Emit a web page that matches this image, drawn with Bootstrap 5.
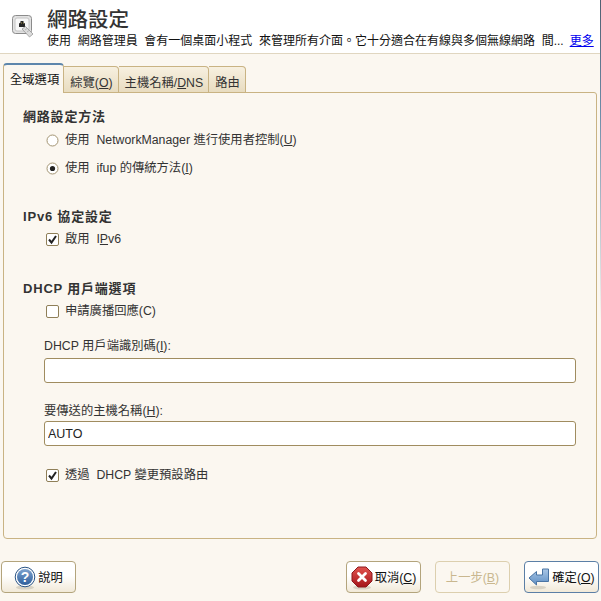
<!DOCTYPE html>
<html lang="zh-Hant">
<head>
  <meta charset="UTF-8" />
  <meta name="viewport" content="width=device-width, initial-scale=1" />
  <title>網路設定</title>
  <link href="https://cdn.jsdelivr.net/npm/bootstrap@5.3.0/dist/css/bootstrap.min.css" rel="stylesheet" />
  <style>
    html, body { height: 100%; }
    body {
      position: relative;
      width: 601px;
      height: 601px;
      overflow: hidden;
      background: #fbf7f0;
      color: #333;
      font-family: "Liberation Sans", "Noto Sans CJK TC", sans-serif;
      font-size: 12.3px;
      line-height: 16px;
    }
    /* window edge that fades out going down */
    body::after {
      content: "";
      position: absolute;
      top: 0;
      right: 0;
      width: 1px;
      height: 320px;
      background: linear-gradient(#4f5f70, #6d8ca8 35%, rgba(109, 140, 168, 0));
    }
    .head-bar { height: 54px; background: #fff; border-bottom: 1px solid #e0d6c0; padding: 8px 0 0 12px; gap: 13px; }
    .head-icon { width: 22px; height: 23px; margin-top: 7px; flex: none; }
    .head-title { font-size: 20.5px; line-height: 24px; font-weight: 500; color: #333; margin-bottom: 1px; }
    .head-text { color: #111; white-space: nowrap; font-size: 12px; }
    .head-more { color: #0000ee; margin-left: 6px; }
    .tab-strip { padding: 9px 0 0 3px; margin-bottom: -1px; position: relative; z-index: 1; }
    .tab-item {
      height: 27px;
      margin-top: 3px;
      padding: 8px 5px 0 6px;
      background: linear-gradient(#f7f0e0, #e8dcc0);
      border: 1px solid #c9b383;
      border-left-width: 0;
      border-radius: 0 4px 0 0;
    }
    .tab-on {
      height: 30px;
      margin-top: 0;
      padding: 7px 4px 0 6px;
      background: #fbf7f0;
      border-left-width: 1px;
      border-bottom: 0;
      border-top: 2px solid #5d86ac;
      border-radius: 4px 4px 0 0;
      color: #111;
    }
    .tab-panel {
      height: 447px;
      width: 594px;
      margin-left: 3px;
      border: 1px solid #c9b383;
      border-radius: 0 3px 4px 4px;
      padding: 16px 20px 0 19px;
    }
    .group-title { font-weight: 700; font-size: 13px; letter-spacing: 0.8px; height: 16px; }
    .option-row { height: 16px; padding-left: 23px; gap: 6px; }
    .radio-mark, .check-mark { width: 13px; height: 13px; flex: none; }
    .field-label { padding-left: 21px; height: 16px; }
    .field-input {
      display: block;
      width: 532px;
      margin-left: 21px;
      height: 25px;
      border: 1px solid #a08c5f;
      border-radius: 3px;
      background: #fff;
      padding: 1px 3px 0;
      color: #222;
      font-size: 12.5px;
    }
    .gap-method-a { margin-top: 7px; }
    .gap-method-b { margin-top: 12px; }
    .gap-ipv6 { margin-top: 33px; }
    .gap-ipv6-opt { margin-top: 6px; }
    .gap-dhcp { margin-top: 34px; }
    .gap-dhcp-opt { margin-top: 6px; }
    .gap-label-a { margin-top: 19px; }
    .gap-input-a { margin-top: 4px; }
    .gap-label-b { margin-top: 20px; }
    .gap-input-b { margin-top: 2px; }
    .gap-route { margin-top: 21px; }
    .foot-bar { padding: 22px 2px 0 1px; gap: 14px; }
    .win-btn {
      height: 32px;
      width: 75px;
      gap: 2px;
      border: 1px solid #b3a47c;
      border-radius: 4px;
      background: linear-gradient(#fff 45%, #f1e9d8);
      color: #111;
      padding: 2px 0 0;
    }
    .win-btn svg { width: 22px; height: 24px; flex: none; }
    .win-off { border-color: #dccfae; background: none; color: #c9b78f; }
    .win-main { border-color: #5b7fa6; }
  </style>
</head>
<body>

  <!-- Header -->
  <div class="head-bar d-flex">
    <svg class="head-icon" viewBox="0 0 22 23">
      <rect x="0.5" y="0.5" width="19" height="18" rx="3" fill="#e2e2e2" stroke="#8b8b8b" />
      <rect x="3" y="3" width="14" height="13" rx="2" fill="#f7f7f7" stroke="#c4c4c4" />
      <path d="M7 12V8.5l1.5-1V6h3v1.500l1.500 1V12z" fill="#262626" />
      <path d="M9 7.500h.8v1H9zM11 7.500h.8v1H11z" fill="#c9b25a" />
      <path d="M10 14l3.500-2.500 7.500 7.500-3.500 3z" fill="#dcdcdc" stroke="#8e8e8e" stroke-width="0.7" />
      <path d="M13 15l2-1.500M15 17l2-1.500" stroke="#a8a8a8" stroke-width="0.7" />
    </svg>
    <div class="min-w-0">
      <div class="head-title">網路設定</div>
      <div class="head-text">使用&nbsp; 網路管理員&nbsp; 會有一個桌面小程式&nbsp; 來管理所有介面。它十分適合在有線與多個無線網路&nbsp; 間...<a class="head-more" href="#">更多</a></div>
    </div>
  </div>

  <!-- Tabs -->
  <div class="tab-strip d-flex align-items-start">
    <div class="tab-item tab-on">全域選項</div>
    <div class="tab-item">綜覽(<u>O</u>)</div>
    <div class="tab-item">主機名稱/<u>D</u>NS</div>
    <div class="tab-item">路由</div>
  </div>

  <div class="tab-panel">
    <div class="group-title">網路設定方法</div>
    <div class="option-row d-flex align-items-center gap-method-a">
      <svg class="radio-mark" viewBox="0 0 13 13"><circle cx="6.500" cy="6.500" r="5.500" fill="#fff" stroke="#a39472" /></svg>
      <span>使用&nbsp; NetworkManager 進行使用者控制(<u>U</u>)</span>
    </div>
    <div class="option-row d-flex align-items-center gap-method-b">
      <svg class="radio-mark" viewBox="0 0 13 13"><circle cx="6.500" cy="6.500" r="5.500" fill="#fff" stroke="#a39472" /><circle cx="6.500" cy="6.500" r="2.600" fill="#222" /></svg>
      <span>使用&nbsp; ifup 的傳統方法(<u>I</u>)</span>
    </div>

    <div class="group-title gap-ipv6">IPv6 協定設定</div>
    <div class="option-row d-flex align-items-center gap-ipv6-opt">
      <svg class="check-mark" viewBox="0 0 13 13"><rect x="0.500" y="0.500" width="12" height="12" rx="1.500" fill="#fff" stroke="#8f7f58" /><path d="M3 6.500l2.500 3L10 3" fill="none" stroke="#222" stroke-width="2" /></svg>
      <span>啟用&nbsp; I<u>P</u>v6</span>
    </div>

    <div class="group-title gap-dhcp">DHCP 用戶端選項</div>
    <div class="option-row d-flex align-items-center gap-dhcp-opt">
      <svg class="check-mark" viewBox="0 0 13 13"><rect x="0.500" y="0.500" width="12" height="12" rx="1.500" fill="#fff" stroke="#8f7f58" /></svg>
      <span>申請廣播回應(C)</span>
    </div>

    <div class="field-label gap-label-a">DHCP 用戶端識別碼(<u>I</u>):</div>
    <input class="field-input gap-input-a" type="text" value="" />
    <div class="field-label gap-label-b">要傳送的主機名稱(<u>H</u>):</div>
    <input class="field-input gap-input-b" type="text" value="AUTO" />
    <div class="option-row d-flex align-items-center gap-route">
      <svg class="check-mark" viewBox="0 0 13 13"><rect x="0.500" y="0.500" width="12" height="12" rx="1.500" fill="#fff" stroke="#8f7f58" /><path d="M3 6.500l2.500 3L10 3" fill="none" stroke="#222" stroke-width="2" /></svg>
      <span>透過&nbsp; DHCP 變更預設路由</span>
    </div>
  </div>

  <!-- Buttons -->
  <div class="foot-bar d-flex">
    <button class="win-btn d-flex align-items-center justify-content-center" type="button">
      <svg viewBox="0 0 22 24">
        <defs>
          <linearGradient id="helpFill" x1="0" y1="0" x2="0" y2="1"><stop offset="0" stop-color="#7ea3cf" /><stop offset="1" stop-color="#2f5f9c" /></linearGradient>
          <linearGradient id="stopFill" x1="0" y1="0" x2="0" y2="1"><stop offset="0" stop-color="#e2544f" /><stop offset="1" stop-color="#a5141a" /></linearGradient>
          <linearGradient id="arrowFill" x1="0" y1="0" x2="0" y2="1"><stop offset="0" stop-color="#a9c6e6" /><stop offset="1" stop-color="#5f8fc4" /></linearGradient>
        </defs>
        <ellipse cx="11" cy="21.500" rx="9" ry="2" fill="#d8d2c4" />
        <circle cx="11" cy="11" r="9.800" fill="#fff" stroke="#2a5486" />
        <circle cx="11" cy="11" r="8" fill="url(#helpFill)" />
        <text x="11" y="16" text-anchor="middle" font-size="14" font-weight="700" fill="#fff" font-family="Liberation Sans">?</text>
      </svg>
      <span>說明</span>
    </button>
    <button class="win-btn d-flex align-items-center justify-content-center ms-auto" type="button">
      <svg viewBox="0 0 22 24">
        <ellipse cx="11" cy="21.500" rx="9" ry="2" fill="#d8d2c4" />
        <path d="M7 1h8l6 6v8l-6 6H7l-6-6V7z" fill="url(#stopFill)" stroke="#8c1a1e" />
        <path d="M7.500 7.500l7 7M14.500 7.500l-7 7" stroke="#fff" stroke-width="2.800" stroke-linecap="round" />
      </svg>
      <span>取消(<u>C</u>)</span>
    </button>
    <button class="win-btn win-off d-flex align-items-center justify-content-center" type="button" disabled>
      <span>上一步(<u>B</u>)</span>
    </button>
    <button class="win-btn win-main d-flex align-items-center justify-content-center" type="button">
      <svg viewBox="0 0 22 24">
        <ellipse cx="10" cy="21.500" rx="8" ry="1.800" fill="#d8d2c4" />
        <path d="M1 12l7.500-6.500V9h6V3h6v12.500H8.500V19z" fill="url(#arrowFill)" stroke="#4a74a3" stroke-linejoin="round" />
      </svg>
      <span>確定(<u>O</u>)</span>
    </button>
  </div>
</body>
</html>
